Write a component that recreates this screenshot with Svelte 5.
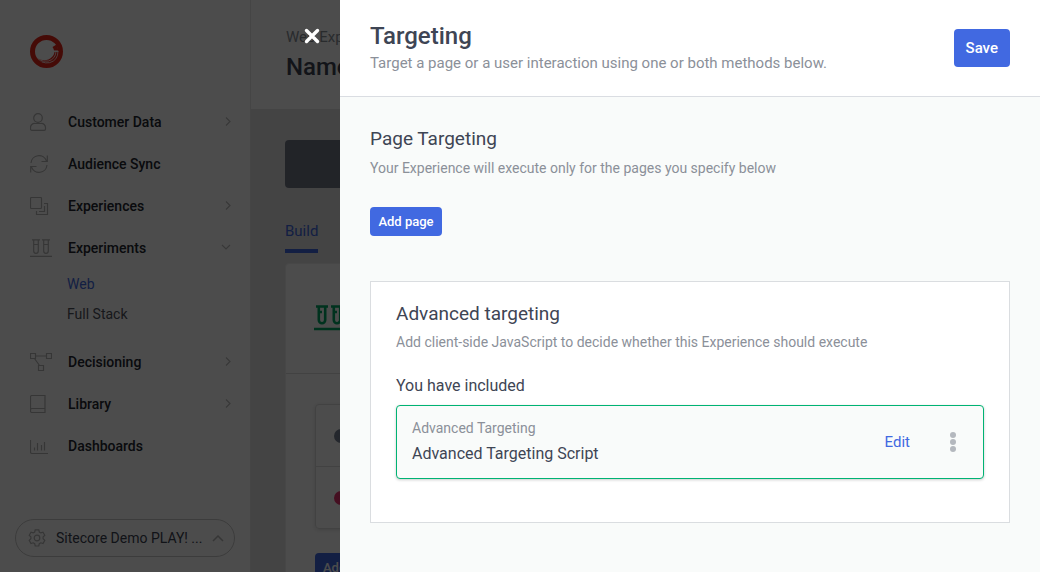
<script>
  const nav = [
    { label: 'Customer Data', icon: 'user', arrow: 'right' },
    { label: 'Audience Sync', icon: 'sync' },
    { label: 'Experiences', icon: 'layers', arrow: 'right' },
    {
      label: 'Experiments',
      icon: 'tubes',
      arrow: 'down',
      children: [{ label: 'Web', active: true }, { label: 'Full Stack' }]
    },
    { label: 'Decisioning', icon: 'flow', arrow: 'right' },
    { label: 'Library', icon: 'book', arrow: 'right' },
    { label: 'Dashboards', icon: 'chart' }
  ];
  const chevrons = {
    right: 'M5 0.5l4 4-4 4',
    down: 'M1 2l4 4 4-4',
    up: 'M1 8l5-5 5 5'
  };
</script>

<div class="page">
  <aside class="sidebar">
    <a class="logo" href="#home" aria-label="Sitecore">
      <svg width="34" height="34" viewBox="0 0 34 34">
        <circle cx="16.500" cy="16.500" r="14" fill="none" stroke="#e8251a" stroke-width="5" />
        <path d="M22.500 12l4-2.500q1.800 2.500 1.700 6h-4.200q-.2-2-1.500-3.500z" fill="#e8251a" />
        <path d="M24.500 17h4q-.5 9-9 11.500-8 1-12-5 5.500 3 11 1 5.500-2.500 6-7.500z" fill="#e8251a" />
        <path d="M26 16.500q-.5 7.500-7.500 9.500-5 1-10-1.500M28 16q0 9.500-8.500 11.700-4 .8-8-1" fill="none" stroke="#fff" stroke-width="0.800" />
        <path d="M23.500 16.300h5" stroke="#fff" stroke-width="0.800" />
      </svg>
    </a>

    <nav>
      {#each nav as item}
        <a class="item" href="#{item.icon}">
          <svg class="icon" width="22" height="18" viewBox="0 0 22 18">
            {#if item.icon === 'user'}
              <circle cx="8" cy="5" r="4.300" />
              <path d="M5 10.500h6a4 4 0 0 1 4.500 4v1.500q0 1.300-1.300 1.300H1.800Q.5 17.300.5 16v-1.500a4 4 0 0 1 4.500-4z" />
            {:else if item.icon === 'sync'}
              <path d="M1 8A8 8 0 0 1 16.500 6M17.300.5V6.500H11.500M17 10A8 8 0 0 1 1.500 12M.7 17.500V11.500H6.500" />
            {:else if item.icon === 'layers'}
              <rect x="0.500" y="0.500" width="11" height="11" rx="1" />
              <path d="M14 6.500h3.500v11h-11V14M14.500 9v5.500H9" />
            {:else if item.icon === 'tubes'}
              <path d="M2 .8h8M12 .8h8M3.700 1v11a2.300 2.300 0 0 0 4.600 0V1M13.700 1v11a2.300 2.300 0 0 0 4.600 0V1M4 5.500h4M14 5.500h4M0 17.400h22" />
            {:else if item.icon === 'flow'}
              <path d="M.5.500h5v5h-5zM16.500.500h5v5h-5zM8.500 12.500h5v5h-5zM5.500 3h11M4.500 5.500l5 7" />
            {:else if item.icon === 'book'}
              <path d="M2 .5h13v17H2Q.5 17.500.5 16V2Q.5.500 2 .500zM.5 15q0-1.500 1.500-1.500h13" />
            {:else}
              <path d="M.5 3v12q0 1.500 1.500 1.500h16M4.500 10.500v3M7.500 6v7.500M11.500 8v5.500M14.500 5v8.500" />
            {/if}
          </svg>
          <span class="label">{item.label}</span>
          {#if item.arrow}
            <svg class="arrow" width="10" height="10" viewBox="0 0 10 10"><path d={chevrons[item.arrow]} /></svg>
          {/if}
        </a>
        {#if item.children}
          <div class="children">
            {#each item.children as child}
              <a href="#{child.label}" class:active={child.active}>{child.label}</a>
            {/each}
          </div>
        {/if}
      {/each}
    </nav>

    <button class="account" type="button">
      <svg class="icon" width="18" height="18" viewBox="0 0 18 18">
        <path d="M7.200.800h3.600l.5 2.200 1.500.9 2.200-.7 1.800 3.100-1.700 1.600v1.900l1.700 1.600-1.800 3.100-2.200-.7-1.500.9-.5 2.300H7.200l-.5-2.300-1.500-.9-2.200.7-1.800-3.100 1.700-1.600V7.900L1.200 6.300 3 3.200l2.200.7L6.700 3z" />
        <circle cx="9" cy="9" r="2.800" />
      </svg>
      <span>Sitecore Demo PLAY! ...</span>
      <svg class="icon" width="12" height="10" viewBox="0 0 12 10"><path d={chevrons.up} stroke-width="1.500" /></svg>
    </button>
  </aside>

  <main>
    <header class="pagehead">
      <p>Web Exp</p>
      <h1>Name</h1>
    </header>
    <div class="content">
      <div class="banner"></div>
      <div class="tabs"><a href="#build">Build</a></div>
      <section class="board">
        <div class="boardhead">
          <svg width="34" height="26" viewBox="0 0 34 26" fill="none" stroke="#00a866" stroke-width="2.600">
            <path d="M2 1.500h12M17 1.500h12M4.800 1.500v13.500a3.200 3.200 0 0 0 6.400 0v-13.500M19.800 1.500v13.500a3.200 3.200 0 0 0 6.400 0v-13.500M0 24h34M5 7h3M20 7h3" />
          </svg>
        </div>
        <div class="variants">
          <div><i class="slate"></i></div>
          <div><i class="pink"></i></div>
        </div>
        <button class="add" type="button">Add</button>
      </section>
    </div>
  </main>
</div>

<div class="shade">
  <button class="close" type="button" aria-label="Close">
    <svg width="16" height="16" viewBox="0 0 16 16"><path d="M2.500 2.500l11 11M13.500 2.500l-11 11" /></svg>
  </button>
  <div class="drawer" role="dialog" aria-labelledby="drawer-title">
    <header>
      <div>
        <h2 id="drawer-title">Targeting</h2>
        <p>Target a page or a user interaction using one or both methods below.</p>
      </div>
      <button class="save" type="button">Save</button>
    </header>
    <div class="body">
      <section class="pages">
        <h3>Page Targeting</h3>
        <p>Your Experience will execute only for the pages you specify below</p>
        <button class="addpage" type="button">Add page</button>
      </section>
      <section class="advanced">
        <h3>Advanced targeting</h3>
        <p>Add client-side JavaScript to decide whether this Experience should execute</p>
        <h4>You have included</h4>
        <div class="script">
          <div class="text">
            <span class="kind">Advanced Targeting</span>
            <span class="name">Advanced Targeting Script</span>
          </div>
          <button class="edit" type="button">Edit</button>
          <button class="more" type="button" aria-label="More options">
            <svg width="6" height="20" viewBox="0 0 6 20" fill="#b4b8be">
              <circle cx="3" cy="3" r="3" /><circle cx="3" cy="10" r="3" /><circle cx="3" cy="17" r="3" />
            </svg>
          </button>
        </div>
      </section>
    </div>
  </div>
</div>

<style>
  :global(body) {
    margin: 0;
    font-family: Roboto, 'Liberation Sans', sans-serif;
    color: #3e4554;
  }
  h1, h2, h3, h4, p { margin: 0; font-weight: 400; }
  a { color: inherit; text-decoration: none; }
  button { font: inherit; border: 0; background: none; padding: 0; cursor: pointer; }
  svg { display: block; flex: none; }
  .page, .shade, .drawer, .sidebar, main, .content, .board, .account, .variants { box-sizing: border-box; }

  .page { display: flex; height: 100vh; overflow: hidden; background: #fff; }
  .sidebar {
    width: 251px;
    flex: none;
    display: flex;
    flex-direction: column;
    border-right: 1px solid #e8e8e8;
    padding: 35px 15px 15px;
  }
  .logo { padding-left: 15px; margin-bottom: 32px; }
  .item { display: flex; align-items: center; height: 42px; padding: 0 4px 0 15px; font-size: 14px; font-weight: 500; color: #22262f; }
  .icon, .arrow { fill: none; stroke: #b4b4b4; stroke-width: 1.2; }
  .arrow { stroke: #bcbcbc; }
  .label { flex: 1; margin-left: 16px; }
  .children { display: flex; flex-direction: column; padding: 0 0 12px 52px; font-size: 14px; line-height: 30px; color: #4e525c; }
  .children .active { color: #4169e1; }
  .account {
    display: flex;
    align-items: center;
    gap: 10px;
    height: 38px;
    margin-top: auto;
    padding: 0 11px 0 12px;
    border: 1px solid #c8c8c8;
    border-radius: 19px;
    font-size: 14px;
    color: #3b4251;
  }
  .account span { flex: 1; text-align: left; white-space: nowrap; }

  main { flex: 1; min-width: 0; background: #e4e4e5; }
  .pagehead { height: 109px; box-sizing: border-box; padding: 26px 35px 0; background: #fff; }
  .pagehead p { font-size: 15px; line-height: 22px; color: #8a8f98; }
  .pagehead h1 { font-size: 24px; line-height: 38px; font-weight: 500; }
  .content { padding: 31px 34px 0; }
  .banner { height: 48px; border-radius: 4px; background: #747a88; }
  .tabs { display: flex; padding-top: 32px; }
  .tabs a { font-size: 15px; line-height: 22px; padding-bottom: 7px; border-bottom: 4px solid #4169e1; color: #4169e1; }
  .board { margin-top: 10px; height: 600px; border-radius: 4px; background: #fff; border: 1px solid #eee; }
  .boardhead { height: 110px; box-sizing: border-box; padding: 41px 28px 0; border-bottom: 1px solid #dedede; }
  .variants { margin: 30px 29px 0; border: 1px solid #dcdcdc; border-radius: 4px; box-shadow: 0 1px 4px #ddd; }
  .variants div { height: 61px; display: flex; align-items: center; padding-left: 18px; }
  .variants div + div { border-top: 1px solid #dcdcdc; }
  .variants i { width: 14px; height: 14px; border-radius: 50%; }
  .slate { background: #7b8496; }
  .pink { background: #e8336e; }
  .add { display: block; margin: 24px 29px; height: 28px; padding: 0 8px; border-radius: 4px; background: #4169e1; color: #fff; font-size: 13px; font-weight: 500; }

  .shade { position: fixed; inset: 0; display: flex; justify-content: flex-end; align-items: flex-start; background: rgba(0, 0, 0, 0.7); }
  .close { margin: 28px 20px 0 0; }
  .close svg { fill: none; stroke: #fff; stroke-width: 3.4; stroke-linecap: round; }
  .drawer { width: 700px; height: 100%; background: #f9fbfa; overflow: auto; }
  .drawer header {
    display: flex;
    align-items: center;
    justify-content: space-between;
    padding: 21px 30px;
    background: #fff;
    border-bottom: 1px solid #dadde2;
  }
  h2 { font-size: 24px; line-height: 30px; font-weight: 500; }
  .drawer p { color: #8b9099; }
  header p { font-size: 15px; line-height: 24px; }
  .save { height: 38px; padding: 0 12px; border-radius: 4px; background: #4169e1; color: #fff; font-size: 15px; font-weight: 500; }
  .body { padding: 28px 30px; }
  h3 { font-size: 19px; line-height: 28px; }
  section p { font-size: 14px; line-height: 20px; }
  .pages p { margin: 5px 0 29px; }
  .addpage { height: 29px; min-width: 72px; padding: 0 8px; border-radius: 4px; background: #4169e1; color: #fff; font-size: 13px; font-weight: 500; }
  .advanced { margin-top: 45px; padding: 18px 25px 43px; background: #fff; border: 1px solid #dadde0; }
  .advanced p { margin: 4px 0 22px; }
  h4 { font-size: 16px; line-height: 24px; }
  .script {
    display: flex;
    align-items: center;
    margin-top: 7px;
    padding: 10px 27px 10px 15px;
    border: 1px solid #00b373;
    border-radius: 4px;
    background: #f9fbfa;
    box-shadow: 0 1px 3px rgba(0, 0, 0, 0.2);
  }
  .text { flex: 1; display: flex; flex-direction: column; }
  .kind { font-size: 14px; line-height: 24px; color: #8b9099; }
  .name { font-size: 16px; line-height: 28px; }
  .edit { font-size: 15px; color: #4169e1; margin-right: 40px; }
</style>
